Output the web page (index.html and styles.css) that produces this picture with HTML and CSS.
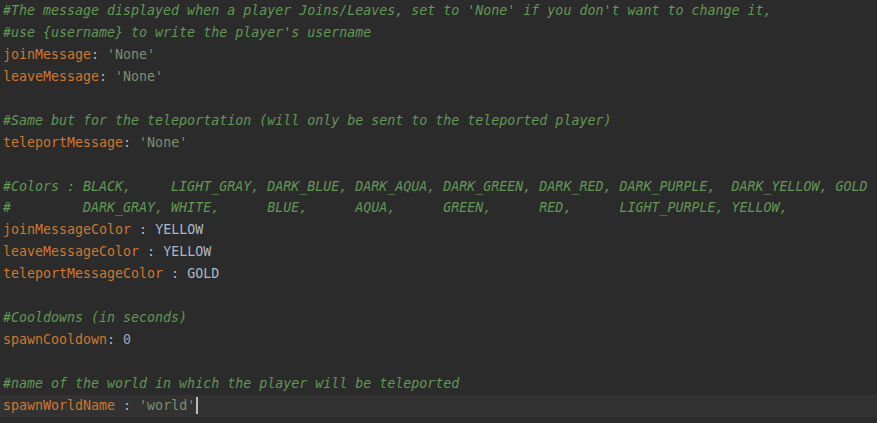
FILE: index.html
```html
<!DOCTYPE html>
<html>
<head>
<meta charset="utf-8">
<link rel="stylesheet" href="styles.css">
</head>
<body>
<div class="editor">
<div class="line"><span class="c">#The message displayed when a player Joins/Leaves, set to 'None' if you don't want to change it,</span></div>
<div class="line"><span class="c">#use {username} to write the player's username</span></div>
<div class="line"><span class="k">joinMessage</span><span class="p">: </span><span class="s">'None'</span></div>
<div class="line"><span class="k">leaveMessage</span><span class="p">: </span><span class="s">'None'</span></div>
<div class="line"> </div>
<div class="line"><span class="c">#Same but for the teleportation (will only be sent to the teleported player)</span></div>
<div class="line"><span class="k">teleportMessage</span><span class="p">: </span><span class="s">'None'</span></div>
<div class="line"> </div>
<div class="line"><span class="c">#Colors : BLACK,     LIGHT_GRAY, DARK_BLUE, DARK_AQUA, DARK_GREEN, DARK_RED, DARK_PURPLE,  DARK_YELLOW, GOLD</span></div>
<div class="line"><span class="c">#         DARK_GRAY, WHITE,      BLUE,      AQUA,      GREEN,      RED,      LIGHT_PURPLE, YELLOW,</span></div>
<div class="line"><span class="k">joinMessageColor</span><span class="p"> : </span><span class="v">YELLOW</span></div>
<div class="line"><span class="k">leaveMessageColor</span><span class="p"> : </span><span class="v">YELLOW</span></div>
<div class="line"><span class="k">teleportMessageColor</span><span class="p"> : </span><span class="v">GOLD</span></div>
<div class="line"> </div>
<div class="line"><span class="c">#Cooldowns (in seconds)</span></div>
<div class="line"><span class="k">spawnCooldown</span><span class="p">: </span><span class="n">0</span></div>
<div class="line"> </div>
<div class="line"><span class="c">#name of the world in which the player will be teleported</span></div>
<div class="line current"><span class="k">spawnWorldName</span><span class="p"> : </span><span class="s">'world'</span><span class="caret"></span></div>
</div>
</body>
</html>
```
FILE: styles.css
```css
html, body {
  margin: 0;
  padding: 0;
  background: #2b2b2b;
  height: 100%;
  overflow: hidden;
}
.editor {
  font-family: "DejaVu Sans Mono", "Liberation Mono", monospace;
  font-size: 13.3px;
  color: #a9b7c6;
  padding-top: 0;
}
.line {
  height: 21.95px;
  line-height: 21.95px;
  padding-left: 3px;
  white-space: pre;
}
.current {
  background: #323232;
}
.c {
  color: #629755;
  font-style: italic;
}
.k {
  color: #cc7832;
}
.p {
  color: #a9b7c6;
}
.s {
  color: #7f8f6f;
}
.v {
  color: #a9b7c6;
}
.n {
  color: #9aa8b6;
}
.caret {
  display: inline-block;
  width: 2px;
  height: 17px;
  background: #bbbbbb;
  vertical-align: middle;
  margin-left: 1px;
}
```
